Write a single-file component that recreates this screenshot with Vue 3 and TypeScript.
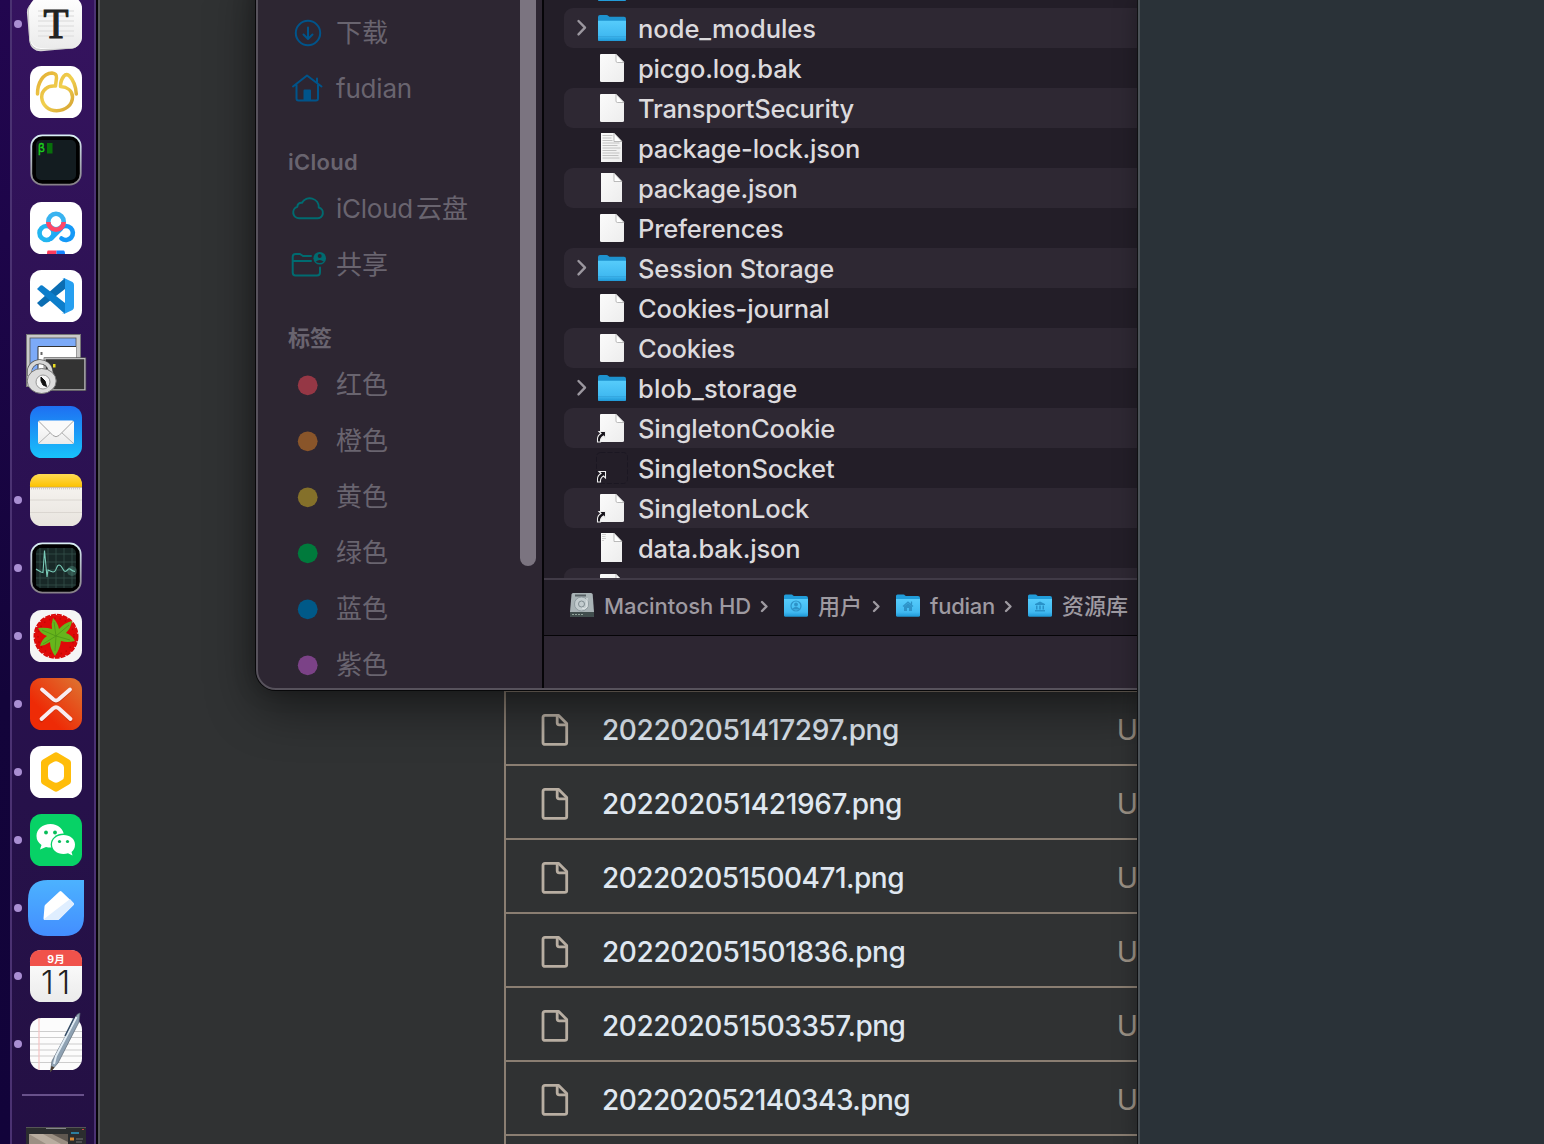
<script setup lang="ts">
interface DockApp { id: string; running: boolean }
interface FileRow { name: string; kind: 'folder' | 'blank' | 'lines' | 'narrow' | 'alias' | 'ghost' | 'data'; width: number }
interface Tag { name: string; color: string }
interface Shot { name: string; width: number }

const apps: DockApp[] = [
  { id: 'typora', running: true },
  { id: 'navicat', running: false },
  { id: 'terminal', running: false },
  { id: 'netdisk', running: false },
  { id: 'vscode', running: false },
  { id: 'remote', running: false },
  { id: 'mail', running: false },
  { id: 'notes', running: true },
  { id: 'activity', running: true },
  { id: 'berry', running: true },
  { id: 'xmind', running: true },
  { id: 'hex', running: true },
  { id: 'wechat', running: true },
  { id: 'pen', running: true },
  { id: 'calendar', running: true },
  { id: 'textedit', running: true },
]

const files: FileRow[] = [
  { name: '', kind: 'folder', width: 0 },
  { name: 'node_modules', kind: 'folder', width: 178 },
  { name: 'picgo.log.bak', kind: 'blank', width: 163.5 },
  { name: 'TransportSecurity', kind: 'blank', width: 216 },
  { name: 'package-lock.json', kind: 'lines', width: 222 },
  { name: 'package.json', kind: 'narrow', width: 159.5 },
  { name: 'Preferences', kind: 'blank', width: 145.5 },
  { name: 'Session Storage', kind: 'folder', width: 196 },
  { name: 'Cookies-journal', kind: 'blank', width: 191.5 },
  { name: 'Cookies', kind: 'blank', width: 97 },
  { name: 'blob_storage', kind: 'folder', width: 159.5 },
  { name: 'SingletonCookie', kind: 'alias', width: 197 },
  { name: 'SingletonSocket', kind: 'ghost', width: 196.5 },
  { name: 'SingletonLock', kind: 'alias', width: 171 },
  { name: 'data.bak.json', kind: 'data', width: 162.5 },
  { name: '', kind: 'blank', width: 0 },
]

const tags: Tag[] = [
  { name: '红色', color: '#953745' },
  { name: '橙色', color: '#89552a' },
  { name: '黄色', color: '#84702a' },
  { name: '绿色', color: '#007a3c' },
  { name: '蓝色', color: '#005988' },
  { name: '紫色', color: '#7b4287' },
]

const shots: Shot[] = [
  { name: '202202051417297.png', width: 297 },
  { name: '202202051421967.png', width: 300 },
  { name: '202202051500471.png', width: 302 },
  { name: '202202051501836.png', width: 303.5 },
  { name: '202202051503357.png', width: 303.5 },
  { name: '202202052140343.png', width: 308 },
]

/* Tracks a label so that its advance width equals the given number of pixels. */
const vFit = {
  mounted(el: HTMLElement, binding: { value: number }) {
    const count = (el.textContent ?? '').length
    if (!count || !binding.value) return
    const natural = el.getBoundingClientRect().width
    el.style.letterSpacing = `${(binding.value - natural) / count}px`
  },
}
</script>

<template>
  <div class="desktop">
    <nav class="dock">
      <div v-for="app in apps" :key="app.id" class="slot">
        <svg width="86" height="68" viewBox="0 0 86 68">
          <circle v-if="app.running" cx="8" cy="34" r="4" fill="#a98ed2" />
          <g v-if="app.id === 'typora'">
            <rect x="18" y="10" width="52" height="50" rx="11" fill="#d9d9d9" transform="rotate(-5 44 34)" />
            <rect x="19" y="9" width="52" height="50" rx="11" fill="#fff" stroke="#bbb" stroke-width=".7" transform="rotate(-2 44 34)" />
            <rect x="20" y="7" width="52" height="51" rx="11" fill="url(#paper)" />
            <path d="M28 21h36M28 26h36M28 31h36M28 36h36M28 41h36M28 46h36" stroke="#e2e2e2" stroke-width="1.4" />
            <text x="46" y="48" text-anchor="middle" font-family="Liberation Serif, serif" font-size="43" fill="#222" stroke="#222" stroke-width="1.200" textLength="25" lengthAdjust="spacingAndGlyphs">T</text>
          </g>
          <g v-else-if="app.id === 'navicat'">
            <rect x="20" y="8" width="52" height="52" rx="11.500" fill="#fff" />
            <path d="M27.500 36C27.500 25 33 15.500 42 15Q47 15.500 46.500 20L45.500 28Q39 27.500 36 30.500Q31.500 34 31.700 39.500C32.500 47.500 38.500 52.700 46.700 52.700C55.500 52.500 62.500 47 62.500 39C62.500 32.500 57 29 50.500 28.500Q50.500 22 54 18Q56 15.500 59 17.500Q65.500 24 66.300 36" fill="none" stroke="url(#gold)" stroke-width="3.500" stroke-linecap="round" stroke-linejoin="round" />
          </g>
          <g v-else-if="app.id === 'terminal'">
            <rect x="21.300" y="9.300" width="49.400" height="49.400" rx="11" fill="#000" stroke="url(#steel)" stroke-width="1.800" />
            <rect x="26" y="14" width="40" height="40" rx="5" fill="#131c20" />
            <rect x="37" y="17" width="5.500" height="10.500" fill="#08700b" />
            <text x="28" y="26" font-family="DejaVu Sans Mono, monospace" font-size="11.500" fill="#1cd11c" stroke="#1cd11c" stroke-width=".3">β</text>
          </g>
          <g v-else-if="app.id === 'netdisk'">
            <rect x="20" y="8" width="52" height="52" rx="11.500" fill="#fff" />
            <g fill="none" stroke-width="4.600" stroke-linecap="round">
              <circle cx="36.500" cy="39" r="7" stroke="#22b5f0" />
              <path d="M41 44.500L51 34.500" stroke="#1fa9f5" />
              <path d="M51 34A7 7 0 1 1 51.500 44.500" stroke="#1599f7" />
              <circle cx="46" cy="27.500" r="7.700" stroke="#39b3f0" />
              <path d="M38.300 28A7.700 7.700 0 0 0 53.700 28" stroke="#ff4668" stroke-linecap="butt" />
            </g>
            <path d="M38 56.500h8.500v3.500h-9.500q0-3.500 1-3.500" fill="#ff3b5c" />
            <path d="M46.500 56.500h7q1.500 0 1.500 3.500h-8.500" fill="#1684ff" />
          </g>
          <g v-else-if="app.id === 'vscode'">
            <rect x="20" y="8" width="52" height="52" rx="11.500" fill="#fff" />
            <path d="M55 16L27 41l3.500 3.500q1 .500 2 0L55 27z" fill="#0b6db2" />
            <path d="M55 52L27 27l3.500-3.500q1-.500 2 0L55 41z" fill="#0d7ecb" />
            <path d="M54 16l8.500 4q1.500 1 1.500 3v22q0 2-1.500 3L54 52q-1.500.400-2-.500 3 1 3-2V18q0-2-3-1.500z" fill="#269ff0" />
          </g>
          <g v-else-if="app.id === 'remote'">
            <rect x="16.500" y="4.500" width="54" height="52" fill="#c9c9c9" stroke="#777" />
            <rect x="20" y="8" width="46" height="44" fill="#7caaf8" stroke="#555" stroke-width=".8" />
            <path d="M28 50V16.500h38v33.500z" fill="#fff" />
            <path d="M28 50V16.500h38" fill="none" stroke="#333" />
            <path d="M31.500 22v3" stroke="#666" stroke-width="2" />
            <rect x="35" y="28.500" width="40" height="31.500" fill="#333" stroke="#bdbdbd" stroke-width="1.500" />
            <rect x="34" y="27.700" width="42" height="33" fill="none" stroke="#444" stroke-width=".6" />
            <rect x="43" y="34" width="2.500" height="3.500" fill="#e7db20" />
            <path d="M19.500 46v-3.500a10.500 10 0 0 1 21-1.500l1 4" fill="none" stroke="#555" stroke-width="5" />
            <path d="M19.500 46v-3.500a10.500 10 0 0 1 21-1.500l1 4" fill="none" stroke="#d6d6d6" stroke-width="3.600" />
            <ellipse cx="31.700" cy="51" rx="14.500" ry="12.500" fill="#dcdcdc" stroke="#777" />
            <circle cx="33" cy="52" r="7" fill="#f5f5f5" stroke="#999" />
            <path d="M31 47l4 4 1.500 5.500-3.500-1.500-2-4z" fill="#111" stroke="#111" />
          </g>
          <g v-else-if="app.id === 'mail'">
            <rect x="20" y="8" width="52" height="52" rx="11.500" fill="url(#sky)" />
            <rect x="28" y="22.500" width="36" height="23.500" rx="2" fill="url(#paper)" />
            <path d="M28.500 45.500L41 34M63.500 45.500L51 34" stroke="#aaa" stroke-width=".9" />
            <path d="M28.500 23L43 37.500q3 2.500 6 0L63.500 23" fill="#fafafa" stroke="#999" stroke-width=".9" />
          </g>
          <g v-else-if="app.id === 'notes'">
            <rect x="20" y="8" width="52" height="52" rx="11.500" fill="url(#cream)" />
            <path d="M20 21v-1.500Q20 8 31.500 8h29Q72 8 72 19.500V21z" fill="url(#yellow)" />
            <path d="M20 21.300h52" stroke="#b79b68" stroke-width=".7" />
            <path d="M21 22.800h50" stroke="#c4bfb7" stroke-dasharray="1 1" />
            <path d="M20 34h52M20 46.500h52" stroke="#d5d1cb" stroke-width=".8" />
          </g>
          <g v-else-if="app.id === 'activity'">
            <rect x="21.300" y="9.300" width="49.400" height="49.400" rx="11" fill="#000" stroke="url(#steel)" stroke-width="1.800" />
            <rect x="26" y="14" width="40" height="40" rx="5" fill="#182827" />
            <path d="M30 14v40M38 14v40M46 14v40M54 14v40M62 14v40M26 20h40M26 28h40M26 36h40M26 44h40M26 51h40" stroke="#37554f" stroke-width=".7" />
            <circle cx="62" cy="37" r="5" fill="#70cbb5" opacity=".25" />
            <path d="M26 35q3 2 5 3l2 .500 1.500-22L37 43l1-7q3 1.500 5 2c4 0 3-7 6-7s4 6 6 6.500c3-.500 3-4 5-2.500q3 2.500 5 2.500" fill="none" stroke="#79cbb8" stroke-width="1.100" />
          </g>
          <g v-else-if="app.id === 'berry'">
            <rect x="20" y="8" width="52" height="52" rx="11.500" fill="#f5f5f5" />
            <circle cx="46" cy="34.300" r="21.300" fill="#e00a08" />
            <circle cx="46" cy="34.300" r="21.600" fill="none" stroke="#d80a0a" stroke-width="1.800" stroke-dasharray="5 1" />
            <circle cx="46" cy="34.300" r="18" fill="none" stroke="#c00707" stroke-width="1.500" stroke-dasharray="1.500 4" />
            <path d="M43 16Q48 21 49 27Q54 21 62 19Q61 26 56 31Q62 33 65 39Q57 41 51 39Q50 47 45 54Q40 47 40 40Q36 43 30 44Q32 37 37 34Q31 32 28 26Q36 25 42 27Q41 22 43 16z" fill="#67b51c" />
            <path d="M46 34l-2-14M46 34l13-11M46 34l14 4M46 34l-1 15M46 34l-13 8M46 34l-14-6" stroke="#4c9617" stroke-width=".8" />
          </g>
          <g v-else-if="app.id === 'xmind'">
            <rect x="20" y="8" width="52" height="52" rx="11.500" fill="url(#ember)" />
            <path d="M32 19.500l11.500 10q2.500 2 5 0L60 19.500M31.500 49.500L43 38q3-2.500 6 0l11.500 11.500" fill="none" stroke="#9e2009" stroke-width="3.800" stroke-linecap="round" opacity=".4" transform="translate(0 1)" />
            <path d="M32 19.500l11.500 10q2.500 2 5 0L60 19.500M31.500 49L43 38.500q3-2.500 6 0L60.500 49" fill="none" stroke="#f8edf1" stroke-width="3.800" stroke-linecap="round" />
          </g>
          <g v-else-if="app.id === 'hex'">
            <rect x="20" y="8" width="52" height="52" rx="11.500" fill="#fff" />
            <path d="M44 15q2-1.500 4 0l11 6.500q2 1 2 3v19q0 2-2 3L48 53q-2 1.500-4 0l-11-6.500q-2-1-2-3v-19q0-2 2-3z" fill="#ffbd0a" />
            <path d="M43.500 24q2.500-1.500 5 0l3.500 2q2 1 2 3.500v9q0 2.500-2 3.500l-3.500 2q-2.500 1.500-5 0L40 42q-2-1-2-3.500v-9q0-2.500 2-3.500z" fill="#fff" />
          </g>
          <g v-else-if="app.id === 'wechat'">
            <rect x="20" y="8" width="52" height="52" rx="11.500" fill="#07d266" />
            <path d="M40.500 18C32.500 18 26.500 23 26.500 30q0 5.500 5 9l-1.500 4.500 6-2.500q8 2 13-2.500 5-4 5-8.500c0-7-6-12-13.500-12z" fill="#fff" />
            <ellipse cx="53.500" cy="38.500" rx="12.800" ry="11" fill="#07d266" />
            <path d="M53.500 29c-6.500 0-11.500 4-11.500 9.500S47 48 53.500 48q2.500 0 4.500-.700l4.500 2.200-1-3.500q3.500-3 3.500-7.500c0-5.500-5-9.500-11.500-9.500z" fill="#fff" />
            <g fill="#07bd59"><circle cx="36" cy="26.500" r="1.900" /><circle cx="45" cy="26.500" r="1.900" /><circle cx="49.500" cy="35.500" r="1.600" /><circle cx="57.500" cy="35.500" r="1.600" /></g>
          </g>
          <g v-else-if="app.id === 'pen'">
            <path d="M38 6h36v36q0 20-20 20H38Q18 62 18 42V26Q18 6 38 6z" fill="url(#azure)" />
            <path d="M49.500 17.500q1-1 2 0L63.500 29q1 1 0 2L49.500 45q-1 1-2 1H35q-1.500 0-1.500-1.500l1-12q0-1 1-2z" fill="#fff" />
            <path d="M63.500 29q1 1 0 2L49.500 45q-1 1-2 1H35l-1-1 26-20z" fill="#dfeeff" />
          </g>
          <g v-else-if="app.id === 'calendar'">
            <rect x="20" y="8" width="52" height="52" rx="11.500" fill="url(#paper)" />
            <path d="M20 24v-4.500Q20 8 31.500 8h29Q72 8 72 19.500V24z" fill="#f0524b" />
            <text x="46" y="20.500" text-anchor="middle" font-family="Inter, Noto Sans CJK SC, sans-serif" font-weight="700" font-size="10.500" fill="#fff">9月</text>
            <text x="31" y="51.500" font-family="Inter, sans-serif" font-weight="350" font-size="32" textLength="29" fill="#222">11</text>
          </g>
          <g v-else>
            <rect x="20" y="8" width="52" height="52" rx="11.500" fill="#fcfcfc" />
            <path d="M20 21.500h52M20 27.500h52M20 34h52M20 40h52M20 46h52M21 52.500h50" stroke="#c7c7c7" stroke-width=".9" />
            <path d="M29 8v52" stroke="#f5c4c4" stroke-width="1.200" />
            <path d="M67 4.500l3-1.500L69 12 48 53l-7.500 8.500L42 51z" fill="#8fa2b3" stroke="#5b6876" stroke-width=".7" />
            <path d="M66.500 7L46 46l-2 8" fill="none" stroke="#e2edf5" stroke-width="2" />
            <path d="M64 8l-9 18" stroke="#354d66" stroke-width="1.500" />
            <path d="M41.500 56l3 1.500-4.500 5z" fill="#493a2b" />
          </g>
        </svg>
      </div>
      <div class="dock-rule"></div>
      <svg class="thumb" width="60" height="17" viewBox="0 0 60 17">
        <rect width="60" height="17" fill="#2b2d2f" />
        <path d="M0 .500h60" stroke="#555" /><path d="M20 1.500h20" stroke="#85858a" />
        <rect x="3" y="7" width="39" height="10" fill="#9b8f83" />
        <path d="M3 7h14l18 10H20z" fill="#b9ada0" />
        <path d="M26 7l16 8V7z" fill="#5f5750" />
        <path d="M45 6h8" stroke="#2c9ac6" stroke-width="1.500" /><path d="M44 12h4" stroke="#d88a35" stroke-width="3" /><path d="M50 12h7M50 15h6" stroke="#777" />
        <path d="M56 2.500h2" stroke="#cf3f44" />
      </svg>
    </nav>

    <section class="browser">
      <div class="table">
        <div v-for="shot in shots" :key="shot.name" class="shot">
          <svg class="doc" width="28" height="34" viewBox="0 0 28 34" fill="none" stroke="#b8aea2" stroke-width="2.800" stroke-linejoin="round">
            <path d="M4 2.400H17.700L25.700 10.500V29.500Q25.700 31.400 23.700 31.400H4.100Q2 31.400 2 29.500V4.400Q2 2.400 4 2.400z" />
            <path d="M16.200 2.600V9.800Q16.200 11.800 18.200 11.800H25" />
          </svg>
          <span v-fit="shot.width" class="shot-name">{{ shot.name }}</span>
          <span class="status">U</span>
        </div>
      </div>
    </section>

    <section class="finder">
      <aside class="sidebar">
        <div class="item">
          <svg width="36" height="32" viewBox="0 0 36 32" fill="none" stroke="#00548a" stroke-width="2" stroke-linecap="round" stroke-linejoin="round"><circle cx="18" cy="16" r="12.200" /><path d="M18 10.500v11M13.500 17.500l4.500 4.500 4.500-4.500" /></svg>
          <span>下载</span>
        </div>
        <div class="item">
          <svg width="36" height="32" viewBox="0 0 36 32" fill="none" stroke="#00548a" stroke-width="2" stroke-linecap="round" stroke-linejoin="round"><path d="M3 13.500L17 2.500 31.500 13.500M6.500 12v13.500q0 2 2 2h17.500q2 0 2-2V12M27 5.500v4" /><path d="M14.500 27v-9.500h5.500V27z" fill="#00548a" /></svg>
          <span v-fit="76">fudian</span>
        </div>
        <h2><span v-fit="70">iCloud</span></h2>
        <div class="item">
          <svg width="36" height="32" viewBox="0 0 36 32" fill="none" stroke="#006b70" stroke-width="2" stroke-linejoin="round"><path d="M9.500 25.300h17.500a5.500 5.500 0 0 0 1.800-10.800A9 9 0 0 0 12 9.800Q7.500 9.500 7.300 13.800A5.900 5.900 0 0 0 9.500 25.300z" /></svg>
          <span v-fit="77">iCloud</span><span class="cloud-tail">云盘</span>
        </div>
        <div class="item">
          <svg class="share" width="36" height="32" viewBox="0 0 36 32" fill="none" stroke="#006b70" stroke-width="2" stroke-linecap="round" stroke-linejoin="round"><path d="M21 7H13L10 5H5.500Q2.700 5 2.700 8v15.500q0 3 2.800 3h21.500q3 0 3-3V18.500M3 12h18" /><circle cx="29.700" cy="9.300" r="6.300" fill="#006b70" stroke="none" /><circle cx="29.700" cy="7.100" r="2" fill="#2d2531" stroke="none" /><path d="M25.700 12.800q4-3.500 8 0-4 2.500-8 0z" fill="#2d2531" stroke="none" /></svg>
          <span>共享</span>
        </div>
        <h2>标签</h2>
        <div v-for="tag in tags" :key="tag.name" class="item">
          <svg width="36" height="32" viewBox="0 0 36 32"><circle cx="17.700" cy="16.300" r="9.900" :fill="tag.color" /></svg>
          <span>{{ tag.name }}</span>
        </div>
        <div class="scrollbar"></div>
      </aside>
      <div class="main">
        <div class="list">
          <div v-for="(file, i) in files" :key="i" class="file" :class="{ striped: i % 2 === 1 }">
            <svg width="66" height="40" viewBox="0 0 66 40">
              <g v-if="file.kind === 'folder'">
                <path d="M14.500 13l6.500 6.700-6.500 6.700" fill="none" stroke="#9b979f" stroke-width="2.400" stroke-linecap="round" stroke-linejoin="round" />
                <path d="M34 9q0-2 2-2h6.500q1 0 2 1l1 .800H60q2 0 2 2V31.500q0 1.500-1.500 1.500h-25Q34 33 34 31.500z" fill="#1e93cf" />
                <path d="M34 12.800h28V31.500q0 1.500-1.500 1.500h-25Q34 33 34 31.500z" fill="url(#folder)" />
                <path d="M34 28.500h28" stroke="#33a5dd" stroke-width=".8" />
              </g>
              <g v-else-if="file.kind === 'blank' || file.kind === 'alias'">
                <path d="M37 6h15l8 8v18.500q0 1.500-1.500 1.500h-21Q36 34 36 32.500V7q0-1 1-1z" fill="url(#sheet)" />
                <path d="M52 6v7q0 1.500 1.500 1.500H60z" fill="#fff" stroke="#aaa" stroke-width=".8" />
              </g>
              <g v-else-if="file.kind !== 'ghost'">
                <path d="M37 5h13l8 8.500V34H37z" fill="url(#sheet)" />
                <path d="M50 5v8.500h8z" fill="#fff" stroke="#aaa" stroke-width=".8" />
                <path v-if="file.kind === 'lines'" d="M38.500 7.500h10M38.500 10h9M38.500 12.500h10M38.500 15h17M38.500 17.500h15M38.500 20h18M38.500 22.500h14M38.500 25h17M38.500 27.500h16M38.500 30h17" stroke="#b5b5b5" stroke-width=".8" />
                <path v-if="file.kind === 'data'" d="M38 6.500h4M38 8.500h3.500M38 10.500h4M38 12.500h2" stroke="#c5c5c5" stroke-width=".8" />
              </g>
              <rect v-else x="32.500" y="4.500" width="31" height="31" rx="4" fill="none" stroke="#1b1722" stroke-dasharray="5 2" />
              <path v-if="file.kind === 'alias' || file.kind === 'ghost'" d="M33.500 34v-3q0-3.500 3.500-5.500l-2-2h6.500v6.500l-2-2q-3.500 2-3 6z" fill="#16131a" stroke="#eee" stroke-width="1.100" />
            </svg>
            <span v-fit="file.width" class="file-name">{{ file.name }}</span>
          </div>
        </div>
        <div class="pathbar">
          <svg width="26" height="28" viewBox="0 0 26 28">
            <path d="M4 1h18q1.500 0 1.700 1.500L25 20v4q0 1-1 1H2q-1 0-1-1v-4L2.500 2.500Q2.700 1 4 1z" fill="#a9b3b6" />
            <path d="M1 20h24v4.500q0 .500-1 .500H2q-1 0-1-.500z" fill="#414e4e" />
            <path d="M3 22.500h12" stroke="#92a49b" stroke-dasharray="2 1" />
            <path d="M6 3.500h11" stroke="#596267" stroke-width="2" />
            <circle cx="12.500" cy="12" r="7" fill="#c3cccf" stroke="#859297" stroke-width=".8" /><circle cx="12.500" cy="12" r="3" fill="none" stroke="#7f8b90" />
            <path d="M18 6v9q-2 3-5 1" fill="none" stroke="#e2e8e9" />
          </svg>
          <span v-fit="147" class="crumb">Macintosh HD</span>
          <svg class="sep" width="10" height="16" viewBox="0 0 10 16"><path d="M2 4L6.500 8.500 2 13" /></svg>
          <svg class="mini" width="26" height="26" viewBox="0 0 26 26"><path d="M1 3q0-1.500 1.500-1.500h6q1 0 1.500 1l1 .500H23q2 0 2 2V22q0 1.500-1.500 1.500h-21Q1 23.500 1 22z" fill="#219dda" /><path d="M1 6h24v16q0 1.500-1.500 1.500h-21Q1 23.500 1 22z" fill="url(#folder)" /><g fill="none" stroke="#2e93c8" stroke-width="1.200"><circle cx="13" cy="13" r="5" /><circle cx="13" cy="11.500" r="1.300" fill="#2e93c8" /><path d="M10 16q3-3 6 0z" fill="#2e93c8" /></g></svg>
          <span class="crumb">用户</span>
          <svg class="sep far" width="10" height="16" viewBox="0 0 10 16"><path d="M2 4L6.500 8.500 2 13" /></svg>
          <svg class="mini" width="26" height="26" viewBox="0 0 26 26"><path d="M1 3q0-1.500 1.500-1.500h6q1 0 1.500 1l1 .500H23q2 0 2 2V22q0 1.500-1.500 1.500h-21Q1 23.500 1 22z" fill="#219dda" /><path d="M1 6h24v16q0 1.500-1.500 1.500h-21Q1 23.500 1 22z" fill="url(#folder)" /><path d="M8 13.500l5-4.500 5 4.500M16.500 8.500v3" fill="none" stroke="#2e93c8" stroke-width="1.300" /><path d="M9 13.500l4-3.500 4 3.500v4.500h-3v-3h-2v3H9z" fill="#2e93c8" /></svg>
          <span v-fit="65" class="crumb">fudian</span>
          <svg class="sep" width="10" height="16" viewBox="0 0 10 16"><path d="M2 4L6.500 8.500 2 13" /></svg>
          <svg class="mini" width="26" height="26" viewBox="0 0 26 26"><path d="M1 3q0-1.500 1.500-1.500h6q1 0 1.500 1l1 .500H23q2 0 2 2V22q0 1.500-1.500 1.500h-21Q1 23.500 1 22z" fill="#219dda" /><path d="M1 6h24v16q0 1.500-1.500 1.500h-21Q1 23.500 1 22z" fill="url(#folder)" /><path d="M8 11l5-2.500 5 2.500v1H8zM9 12.500h1.500v4H9zM12.200 12.500h1.600v4h-1.600zM15.500 12.500H17v4h-1.500zM8 17h10v1.500H8z" fill="#2992c8" /></svg>
          <span class="crumb">资源库</span>
        </div>
        <div class="statusbar"></div>
      </div>
    </section>

    <section class="panel"></section>

    <svg class="defs" width="0" height="0">
      <defs>
        <linearGradient id="paper" x2="0" y2="1"><stop stop-color="#fff" /><stop offset="1" stop-color="#ebebeb" /></linearGradient>
        <linearGradient id="sheet" x2="1" y2="1"><stop stop-color="#fbfbfb" /><stop offset="1" stop-color="#ededed" /></linearGradient>
        <linearGradient id="gold" x2="1" y2="1"><stop stop-color="#e2ad33" /><stop offset=".5" stop-color="#f1d04f" /><stop offset="1" stop-color="#d19c2e" /></linearGradient>
        <linearGradient id="steel" x2="0" y2="1"><stop stop-color="#d9eef5" /><stop offset="1" stop-color="#868087" /></linearGradient>
        <linearGradient id="sky" x2="0" y2="1"><stop stop-color="#1e6ff2" /><stop offset="1" stop-color="#18c2fb" /></linearGradient>
        <linearGradient id="cream" x2="0" y2="1"><stop stop-color="#f9f7f4" /><stop offset="1" stop-color="#e8e4de" /></linearGradient>
        <linearGradient id="yellow" x2="0" y2="1"><stop stop-color="#ffda52" /><stop offset="1" stop-color="#fcc200" /></linearGradient>
        <linearGradient id="ember" x1="0" y1="1" x2="1" y2="0"><stop offset=".3" stop-color="#ee2b06" /><stop offset="1" stop-color="#dd7632" /></linearGradient>
        <linearGradient id="azure" x2="0" y2="1"><stop stop-color="#4cb2ff" /><stop offset="1" stop-color="#438eff" /></linearGradient>
        <linearGradient id="folder" x2="0" y2="1"><stop stop-color="#56ccfb" /><stop offset=".75" stop-color="#40b9f1" /><stop offset="1" stop-color="#1f98d6" /></linearGradient>
      </defs>
    </svg>
  </div>
</template>

<style>
body { background: #1a0440; overflow: hidden; }
</style>

<style scoped>
* { box-sizing: border-box; }
svg { display: block; flex: none; }
.desktop {
  position: relative;
  width: 1544px;
  height: 1144px;
  overflow: hidden;
  background: linear-gradient(180deg, #22064f 0, #1d0549 240px, #13043a 700px, #12033a 1144px);
  font-family: Inter, "Noto Sans CJK SC", sans-serif;
}
.defs { position: absolute; }

.dock {
  position: absolute;
  left: 10px;
  top: 0;
  width: 86px;
  height: 1144px;
  overflow: hidden;
  display: flex;
  flex-direction: column;
  background: linear-gradient(180deg, #35135f 0, #2e1255 300px, #2b1152 500px, #26114a 800px, #241044 1144px);
  box-shadow: inset 2px 0 #4b3272, inset -2px 0 #4b3272;
}
.slot { flex: none; height: 68px; }
.slot:first-child { margin-top: -10px; }
.dock-rule { flex: none; width: 62px; height: 2px; margin: 16px 0 0 12px; background: #68518b; }
.thumb { margin: 31px 0 0 16px; }

.browser {
  position: absolute;
  left: 98px;
  top: 0;
  width: 1041px;
  height: 1144px;
  overflow: hidden;
  background: #303233;
  border-left: 2px solid #545657;
  box-shadow: 0 0 0 2px #050308;
}
.table { margin: 690px 0 0 404px; border-left: 2px solid #8a7e72; border-top: 2px solid #8a7e72; height: 460px; }
.shot {
  display: flex;
  align-items: center;
  height: 74px;
  padding: 4px 0 0 35px;
  border-bottom: 2px solid #8a7e72;
  white-space: nowrap;
}
.shot-name { margin-left: 33px; font-size: 28px; line-height: 34px; font-weight: 500; color: #dfe7f0; }
.status { margin-left: auto; margin-right: 1px; font-size: 28.500px; line-height: 34px; color: #9b9185; }

.finder {
  position: absolute;
  left: 256px;
  top: -40px;
  width: 900px;
  height: 730px;
  display: flex;
  overflow: hidden;
  border: 2px solid #57525c;
  border-radius: 20px;
  background: #2d2632;
  box-shadow: 0 0 0 1px #08080a, 0 18px 50px rgba(0, 0, 0, .45), 0 0 22px rgba(0, 0, 0, .25);
}
.sidebar {
  position: relative;
  width: 286px;
  flex: none;
  padding: 43px 0 0 32px;
  border-right: 2px solid #060508;
  color: #69646f;
}
.item { display: flex; align-items: center; height: 56px; font-size: 26px; white-space: nowrap; }
.item > span { margin-left: 10px; line-height: 36px; }
.item > .cloud-tail { margin-left: 3px; }
.share { overflow: visible; }
h2 { display: flex; align-items: center; height: 64px; margin: 0 0 0 -2px; padding-top: 26px; font-size: 22px; line-height: 30px; font-weight: 600; }
.scrollbar { position: absolute; left: 262px; top: -20px; width: 16px; height: 624px; border-radius: 8px; background: #7b7480; }
.main { flex: 1; min-width: 0; display: flex; flex-direction: column; background: #231e28; }
.list { flex: none; height: 616px; overflow: hidden; padding: 6px 0 0 20px; }
.file { display: flex; align-items: center; height: 40px; border-radius: 9px; }
.file.striped { background: #2e2833; }
.file-name { margin-left: 8px; padding-top: 2px; font-size: 25.500px; line-height: 36px; font-weight: 500; color: #dcdadd; white-space: nowrap; }
.pathbar {
  flex: none;
  display: flex;
  align-items: center;
  height: 58px;
  padding: 0 0 4px 25px;
  border-top: 2px solid #413b47;
  border-bottom: 1px solid #050407;
  color: #9e9aa1;
  font-size: 22px;
  white-space: nowrap;
}
.crumb { margin-left: 9px; line-height: 30px; font-weight: 500; }
.sep { margin: 0 13px 0 9px; fill: none; stroke: #9e9aa1; stroke-width: 2.400; stroke-linecap: round; stroke-linejoin: round; }
.sep.far { margin-left: 10px; }
.statusbar { flex: 1; background: #2d2632; }

.panel {
  position: absolute;
  left: 1138px;
  top: 0;
  width: 420px;
  height: 1144px;
  background: #2a3238;
  border-left: 2px solid #4b5257;
  box-shadow: 0 0 0 1px #101113, 0 0 22px rgba(0, 0, 0, .35);
}
</style>
